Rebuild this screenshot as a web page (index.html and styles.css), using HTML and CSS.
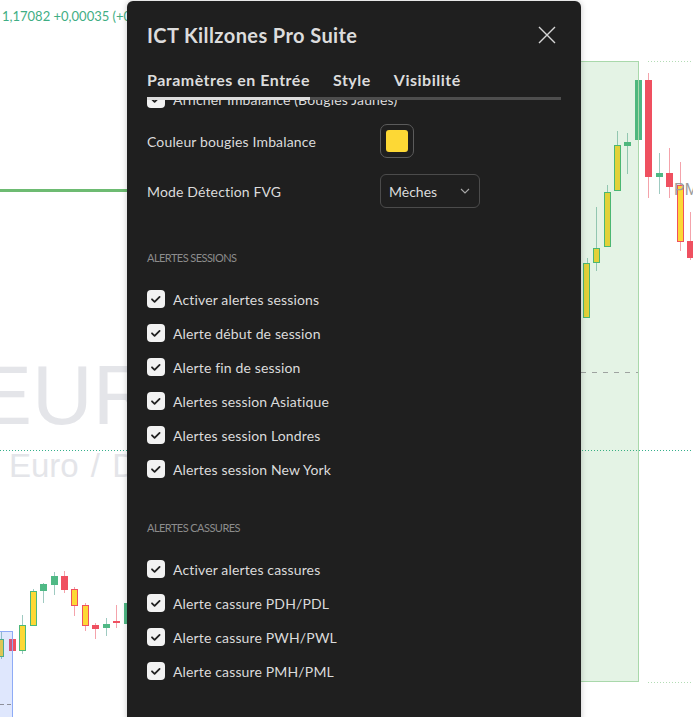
FILE: index.html
```html
<!DOCTYPE html>
<html lang="fr">
<head>
<meta charset="utf-8">
<title>ICT Killzones Pro Suite</title>
<link rel="stylesheet" href="styles.css">
</head>
<body>
<div class="chart">
  <div class="quote">1,17082 +0,00035 (+0,03%)</div>
  <div class="level-line"></div>
  <div class="wm-symbol">EUR</div>
  <div class="wm-name">Euro / Dollar</div>
  <div class="dotted mid-dots"></div>
  <div class="dotted-light top-dots"></div>
  <div class="dotted-light bottom-dots"></div>

  <div class="range-box"></div>
  <div class="dash-line"></div>

  <!-- left bottom candles -->
  <div class="wick gw" style="left:1px;top:632px;height:27px"></div>
  <div class="body yg" style="left:-3px;top:639px;height:18px"></div>
  <div class="wick rw" style="left:12px;top:635px;height:25px"></div>
  <div class="body r" style="left:9px;top:639px;height:12px"></div>
  <div class="wick gw" style="left:22px;top:615px;height:39px"></div>
  <div class="body yg" style="left:19px;top:625px;height:26px"></div>
  <div class="wick gw" style="left:33px;top:589px;height:4px"></div>
  <div class="body yg" style="left:30px;top:591px;height:35px"></div>
  <div class="wick gw" style="left:43px;top:583px;height:20px"></div>
  <div class="body g" style="left:40px;top:584px;height:7px"></div>
  <div class="wick gw" style="left:54px;top:572px;height:23px"></div>
  <div class="body g" style="left:51px;top:576px;height:9px"></div>
  <div class="wick rw" style="left:64px;top:571px;height:22px"></div>
  <div class="body r" style="left:61px;top:576px;height:14px"></div>
  <div class="wick rw" style="left:74px;top:587px;height:29px"></div>
  <div class="body yr" style="left:71px;top:589px;height:17px"></div>
  <div class="wick rw" style="left:85px;top:603px;height:28px"></div>
  <div class="body yr" style="left:82px;top:605px;height:21px"></div>
  <div class="wick rw" style="left:95px;top:623px;height:16px"></div>
  <div class="body r" style="left:92px;top:625px;height:4px"></div>
  <div class="wick gw" style="left:106px;top:618px;height:18px"></div>
  <div class="body g" style="left:103px;top:624px;height:4px"></div>
  <div class="wick rw" style="left:116px;top:605px;height:23px"></div>
  <div class="body r" style="left:113px;top:621px;height:2px"></div>
  <div class="body g" style="left:124px;top:603px;height:21px"></div>

  <div class="blue-box"></div>
  <div class="blue-dash"></div>

  <!-- right candles -->
  <div class="wick gw" style="left:587px;top:258px;height:6px"></div>
  <div class="body yg" style="left:583px;top:263px;height:55px"></div>
  <div class="wick gw" style="left:596px;top:207px;height:64px"></div>
  <div class="body yg" style="left:593px;top:248px;height:15px"></div>
  <div class="wick gw" style="left:607px;top:185px;height:8px"></div>
  <div class="body yg" style="left:604px;top:192px;height:55px"></div>
  <div class="wick gw" style="left:617px;top:131px;height:15px"></div>
  <div class="body yg" style="left:614px;top:145px;height:46px"></div>
  <div class="wick gw" style="left:627px;top:133px;height:41px"></div>
  <div class="body g" style="left:624px;top:142px;height:4px"></div>
  <div class="body g" style="left:635px;top:80px;height:60px"></div>
  <div class="wick rw" style="left:648px;top:73px;height:125px"></div>
  <div class="body r" style="left:645px;top:80px;height:97px"></div>
  <div class="wick gw" style="left:659px;top:153px;height:41px"></div>
  <div class="body g" style="left:656px;top:173px;height:4px"></div>
  <div class="wick rw" style="left:669px;top:148px;height:50px"></div>
  <div class="body r" style="left:666px;top:173px;height:14px"></div>
  <div class="wick rw" style="left:680px;top:162px;height:89px"></div>
  <div class="body yr" style="left:677px;top:185px;height:57px"></div>
  <div class="wick rw" style="left:690px;top:212px;height:48px"></div>
  <div class="body r" style="left:687px;top:241px;height:17px"></div>
  <div class="pm-label">PMH</div>
</div>

<div class="dialog">
  <div class="dlg-header">
    <div class="dlg-title">ICT Killzones Pro Suite</div>
    <svg class="close" width="18" height="18" viewBox="0 0 18 18"><path d="M1 1L17 17M17 1L1 17" stroke="#d6d6d6" stroke-width="1.4" fill="none"/></svg>
  </div>
  <div class="tabs">
    <div class="tab active">Paramètres en Entrée</div>
    <div class="tab">Style</div>
    <div class="tab">Visibilité</div>
  </div>
  <div class="dlg-body">
    <div class="scroll">
      <label class="row check-row">
        <span class="cb"><svg width="18" height="18" viewBox="0 0 18 18"><path d="M5 9.3l2.6 2.6 5-5" stroke="#202020" stroke-width="1.8" fill="none" stroke-linecap="round" stroke-linejoin="round"/></svg></span>
        <span class="lbl">Afficher Imbalance (Bougies Jaunes)</span>
      </label>
      <div class="row field-row">
        <span class="lbl">Couleur bougies Imbalance</span>
        <span class="swatch"><span class="swatch-fill"></span></span>
      </div>
      <div class="row field-row">
        <span class="lbl">Mode Détection FVG</span>
        <span class="select"><span>Mèches</span><svg width="10" height="6" viewBox="0 0 10 6"><path d="M1 1l4 4 4-4" stroke="#a8a8a8" stroke-width="1.1" fill="none"/></svg></span>
      </div>

      <div class="section">Alertes sessions</div>
      <label class="row check-row"><span class="cb"><svg width="18" height="18" viewBox="0 0 18 18"><path d="M5 9.3l2.6 2.6 5-5" stroke="#202020" stroke-width="1.8" fill="none" stroke-linecap="round" stroke-linejoin="round"/></svg></span><span class="lbl">Activer alertes sessions</span></label>
      <label class="row check-row"><span class="cb"><svg width="18" height="18" viewBox="0 0 18 18"><path d="M5 9.3l2.6 2.6 5-5" stroke="#202020" stroke-width="1.8" fill="none" stroke-linecap="round" stroke-linejoin="round"/></svg></span><span class="lbl">Alerte début de session</span></label>
      <label class="row check-row"><span class="cb"><svg width="18" height="18" viewBox="0 0 18 18"><path d="M5 9.3l2.6 2.6 5-5" stroke="#202020" stroke-width="1.8" fill="none" stroke-linecap="round" stroke-linejoin="round"/></svg></span><span class="lbl">Alerte fin de session</span></label>
      <label class="row check-row"><span class="cb"><svg width="18" height="18" viewBox="0 0 18 18"><path d="M5 9.3l2.6 2.6 5-5" stroke="#202020" stroke-width="1.8" fill="none" stroke-linecap="round" stroke-linejoin="round"/></svg></span><span class="lbl">Alertes session Asiatique</span></label>
      <label class="row check-row"><span class="cb"><svg width="18" height="18" viewBox="0 0 18 18"><path d="M5 9.3l2.6 2.6 5-5" stroke="#202020" stroke-width="1.8" fill="none" stroke-linecap="round" stroke-linejoin="round"/></svg></span><span class="lbl">Alertes session Londres</span></label>
      <label class="row check-row"><span class="cb"><svg width="18" height="18" viewBox="0 0 18 18"><path d="M5 9.3l2.6 2.6 5-5" stroke="#202020" stroke-width="1.8" fill="none" stroke-linecap="round" stroke-linejoin="round"/></svg></span><span class="lbl">Alertes session New York</span></label>

      <div class="section">Alertes cassures</div>
      <label class="row check-row"><span class="cb"><svg width="18" height="18" viewBox="0 0 18 18"><path d="M5 9.3l2.6 2.6 5-5" stroke="#202020" stroke-width="1.8" fill="none" stroke-linecap="round" stroke-linejoin="round"/></svg></span><span class="lbl">Activer alertes cassures</span></label>
      <label class="row check-row"><span class="cb"><svg width="18" height="18" viewBox="0 0 18 18"><path d="M5 9.3l2.6 2.6 5-5" stroke="#202020" stroke-width="1.8" fill="none" stroke-linecap="round" stroke-linejoin="round"/></svg></span><span class="lbl">Alerte cassure PDH/PDL</span></label>
      <label class="row check-row"><span class="cb"><svg width="18" height="18" viewBox="0 0 18 18"><path d="M5 9.3l2.6 2.6 5-5" stroke="#202020" stroke-width="1.8" fill="none" stroke-linecap="round" stroke-linejoin="round"/></svg></span><span class="lbl">Alerte cassure PWH/PWL</span></label>
      <label class="row check-row"><span class="cb"><svg width="18" height="18" viewBox="0 0 18 18"><path d="M5 9.3l2.6 2.6 5-5" stroke="#202020" stroke-width="1.8" fill="none" stroke-linecap="round" stroke-linejoin="round"/></svg></span><span class="lbl">Alerte cassure PMH/PML</span></label>
    </div>
  </div>
</div>
</body>
</html>
```

FILE: styles.css
```css
* { box-sizing: border-box; }
html, body { margin: 0; padding: 0; }
body {
  width: 693px;
  height: 717px;
  overflow: hidden;
  background: #ffffff;
  font-family: Lato, "Liberation Sans", sans-serif;
  position: relative;
}

/* ---------- chart canvas ---------- */
.chart {
  position: absolute;
  inset: 0;
  overflow: hidden;
  background: #ffffff;
}
.quote {
  position: absolute;
  left: 2px;
  top: 8px;
  font-size: 13px;
  line-height: 16px;
  color: #3fae84;
  white-space: nowrap;
}
.level-line {
  position: absolute;
  left: 0;
  top: 189px;
  width: 140px;
  height: 3px;
  background: #6dbb72;
}
.wm-symbol {
  position: absolute;
  left: -24px;
  top: 353px;
  font-family: "Liberation Sans", Arial, sans-serif;
  font-size: 84px;
  line-height: 84px;
  color: #e4e5e9;
  white-space: nowrap;
}
.wm-name {
  position: absolute;
  left: 9px;
  top: 449px;
  font-family: "Liberation Sans", Arial, sans-serif;
  font-size: 33px;
  line-height: 33px;
  word-spacing: 3px;
  color: #e4e5e9;
  white-space: nowrap;
}
.dotted {
  position: absolute;
  height: 1px;
  background: repeating-linear-gradient(to right, #35b08b 0 1px, transparent 1px 3px);
  z-index: 1;
}
.mid-dots { left: 0; top: 450px; width: 693px; }
.dotted-light {
  position: absolute;
  height: 1px;
  background: repeating-linear-gradient(to right, #b3dcb5 0 1px, transparent 1px 3px);
}
.top-dots { left: 648px; top: 61px; width: 45px; }
.bottom-dots { left: 648px; top: 682px; width: 45px; }

.range-box {
  position: absolute;
  left: 560px;
  top: 61px;
  width: 79px;
  height: 621px;
  background: rgba(76, 175, 80, 0.15);
  border: 1px solid #a9d8ab;
  z-index: 2;
}
.dash-line {
  position: absolute;
  left: 570px;
  top: 372px;
  width: 68px;
  height: 1px;
  background: repeating-linear-gradient(to right, #9ea3a0 0 5px, transparent 5px 11px);
  z-index: 3;
}
.blue-box {
  position: absolute;
  left: -2px;
  top: 631px;
  width: 15px;
  height: 100px;
  background: rgba(66, 110, 245, 0.17);
  border: 1px solid #8eabf6;
  z-index: 2;
}
.blue-dash {
  position: absolute;
  left: 0;
  top: 704px;
  width: 12px;
  height: 1px;
  background: repeating-linear-gradient(to right, #8d8f9a 0 4px, transparent 4px 7px);
  z-index: 3;
}

.wick {
  position: absolute;
  width: 1px;
}
.gw { background: #9fcac1; }
.rw { background: #f4a3ab; }
.body {
  position: absolute;
  width: 7px;
}
.g { background: #4fb985; }
.r { background: #ef5060; }
.yg { background: #fdd835; border: 1.5px solid #4cb879; }
.yr { background: #fdd835; border: 1.5px solid #ef5060; }
.pm-label {
  position: absolute;
  left: 674px;
  top: 181px;
  font-family: "Liberation Sans", Arial, sans-serif;
  font-size: 16px;
  line-height: 18px;
  color: #9c9c9c;
  white-space: nowrap;
  z-index: 4;
}

/* ---------- dialog ---------- */
.dialog {
  position: absolute;
  left: 127px;
  top: 1px;
  width: 454px;
  height: 730px;
  background: #1f1f1f;
  border-radius: 6px 6px 0 0;
  box-shadow: 0 0 6px rgba(0, 0, 0, 0.22);
  display: flex;
  flex-direction: column;
  color: #dbdbdb;
  z-index: 10;
}
.dlg-header {
  height: 68px;
  padding: 0 25px 0 20px;
  display: flex;
  align-items: center;
  justify-content: space-between;
}
.dlg-title {
  font-size: 20px;
  font-weight: 700;
  color: #dcdcdc;
  letter-spacing: 0.4px;
}
.close { display: block; }

.tabs {
  margin: 1px 20px 0;
  display: flex;
  gap: 23px;
  border-bottom: 3px solid #4e4e4e;
}
.tab {
  font-size: 16px;
  font-weight: 700;
  line-height: 20px;
  letter-spacing: 0.5px;
  padding-bottom: 7px;
  color: #dcdcdc;
}
.tab.active {
  border-bottom: 3px solid #dcdcdc;
  margin-bottom: -3px;
}

.dlg-body {
  flex: 1;
  overflow: hidden;
  padding: 0 20px;
}
.scroll {
  margin-top: -18px;
}
.row {
  display: flex;
  align-items: center;
}
.check-row {
  height: 34px;
  gap: 8px;
}
.cb {
  width: 18px;
  height: 18px;
  border-radius: 4px;
  background: #f2f2f2;
  display: flex;
  flex: none;
}
.cb svg { display: block; }
.lbl {
  font-size: 14px;
  letter-spacing: 0.15px;
  color: #dbdbdb;
  white-space: nowrap;
}
.field-row {
  height: 50px;
}
.field-row .lbl {
  width: 233px;
  flex: none;
}
.swatch {
  width: 34px;
  height: 34px;
  border: 1px solid #5b5b5b;
  border-radius: 7px;
  padding: 5px;
  display: flex;
}
.swatch-fill {
  flex: 1;
  background: #fdd835;
  border-radius: 3px;
}
.select {
  width: 100px;
  height: 34px;
  border: 1px solid #4b4b4b;
  border-radius: 6px;
  padding: 0 9px 0 8px;
  display: flex;
  align-items: center;
  justify-content: space-between;
  font-size: 14px;
  color: #dbdbdb;
}
.select svg { display: block; }
.section {
  margin-top: 34px;
  margin-bottom: 16px;
  height: 16px;
  line-height: 16px;
  font-size: 11px;
  letter-spacing: -0.55px;
  text-transform: uppercase;
  color: #8c8c8c;
}
```
